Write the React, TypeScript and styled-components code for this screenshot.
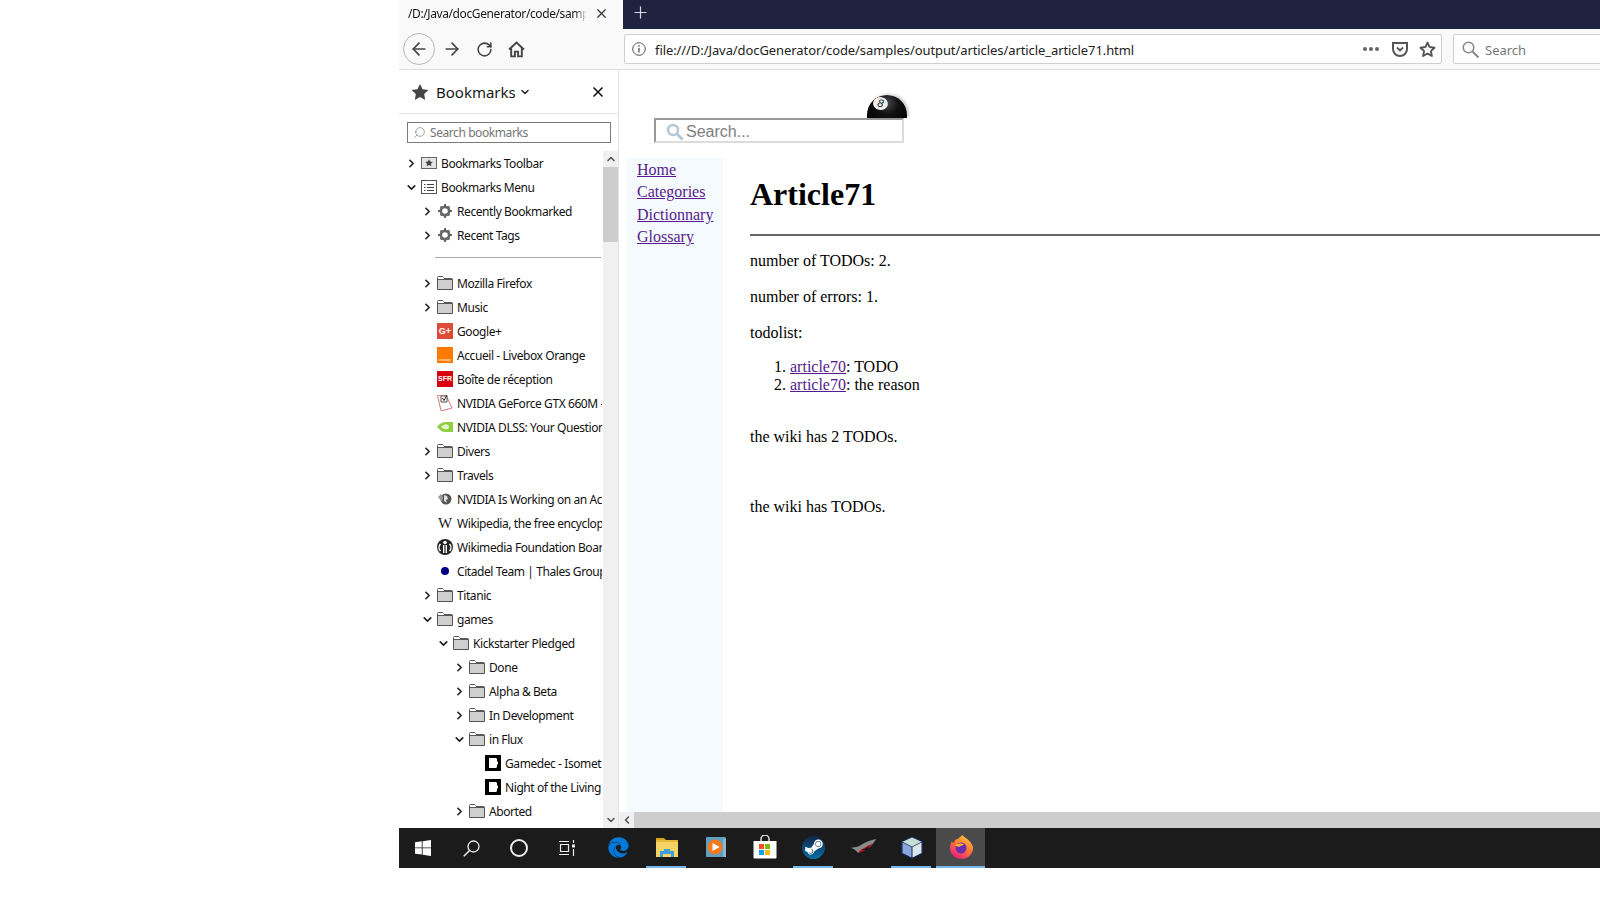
import styled, { createGlobalStyle } from 'styled-components';
import { ArrowLeft, ArrowRight, ChevronDown, ChevronLeft, ChevronRight, ChevronUp, Plus, RotateCw, Search, X } from 'lucide-react';
import { FaEdge, FaSteamSymbol } from 'react-icons/fa';

const GlobalStyle = createGlobalStyle`
  html, body {
    margin: 0;
    padding: 0;
    width: 1600px;
    height: 900px;
    overflow: hidden;
    background: #fff;
  }
`;

const uiFont = `'Noto Sans', 'Open Sans', sans-serif`;
const pageFont = `'Liberation Serif', serif`;

type IconName =
  | 'toolbar' | 'menu' | 'gear' | 'folder' | 'google' | 'orange' | 'sfr' | 'nvidiaDriver' | 'nvidiaEye'
  | 'nvidiaHead' | 'wikipedia' | 'wikimedia' | 'dot' | 'kickstarter';

type Row = { label?: string; level?: number; twisty?: 'open' | 'closed'; icon?: IconName; separator?: boolean };

const rows: Row[] = [
  { label: 'Bookmarks Toolbar', level: 0, twisty: 'closed', icon: 'toolbar' },
  { label: 'Bookmarks Menu', level: 0, twisty: 'open', icon: 'menu' },
  { label: 'Recently Bookmarked', level: 1, twisty: 'closed', icon: 'gear' },
  { label: 'Recent Tags', level: 1, twisty: 'closed', icon: 'gear' },
  { separator: true },
  { label: 'Mozilla Firefox', level: 1, twisty: 'closed', icon: 'folder' },
  { label: 'Music', level: 1, twisty: 'closed', icon: 'folder' },
  { label: 'Google+', level: 1, icon: 'google' },
  { label: 'Accueil - Livebox Orange', level: 1, icon: 'orange' },
  { label: 'Boîte de réception', level: 1, icon: 'sfr' },
  { label: 'NVIDIA GeForce GTX 660M -', level: 1, icon: 'nvidiaDriver' },
  { label: 'NVIDIA DLSS: Your Question', level: 1, icon: 'nvidiaEye' },
  { label: 'Divers', level: 1, twisty: 'closed', icon: 'folder' },
  { label: 'Travels', level: 1, twisty: 'closed', icon: 'folder' },
  { label: 'NVIDIA Is Working on an Ac', level: 1, icon: 'nvidiaHead' },
  { label: 'Wikipedia, the free encyclop', level: 1, icon: 'wikipedia' },
  { label: 'Wikimedia Foundation Boar', level: 1, icon: 'wikimedia' },
  { label: 'Citadel Team | Thales Group', level: 1, icon: 'dot' },
  { label: 'Titanic', level: 1, twisty: 'closed', icon: 'folder' },
  { label: 'games', level: 1, twisty: 'open', icon: 'folder' },
  { label: 'Kickstarter Pledged', level: 2, twisty: 'open', icon: 'folder' },
  { label: 'Done', level: 3, twisty: 'closed', icon: 'folder' },
  { label: 'Alpha & Beta', level: 3, twisty: 'closed', icon: 'folder' },
  { label: 'In Development', level: 3, twisty: 'closed', icon: 'folder' },
  { label: 'in Flux', level: 3, twisty: 'open', icon: 'folder' },
  { label: 'Gamedec - Isomet', level: 4, icon: 'kickstarter' },
  { label: 'Night of the Living', level: 4, icon: 'kickstarter' },
  { label: 'Aborted', level: 3, twisty: 'closed', icon: 'folder' },
];

const FolderIcon = () => (
  <svg width="16" height="16" viewBox="0 0 16 16">
    <path d="M.5 14.5V2.500a1 1 0 0 1 1-1h4l1.500 2h7.500a1 1 0 0 1 1 1v10z" fill="#cfcfcf" stroke="#555" />
    <path d="M.5 4.500h15" stroke="#555" fill="none" />
    <path d="M1 2h5l1.200 2H1z" fill="#fff" />
  </svg>
);

const GearIcon = () => (
  <svg width="16" height="16" viewBox="0 0 16 16">
    <g fill="#666">
      <path d="M8 2.500a5.500 5.500 0 1 0 0 11 5.500 5.500 0 0 0 0-11zm0 2.700a2.800 2.800 0 1 1 0 5.600 2.800 2.800 0 0 1 0-5.600z" />
      <path d="M7 1h2v2.500H7zM7 12.500h2V15H7zM1 7h2.500v2H1zM12.500 7H15v2h-2.500zM2.800 4.200l1.400-1.400 1.800 1.800-1.400 1.400zM10 11.400l1.400-1.400 1.800 1.800-1.400 1.400zM2.800 11.800l1.800-1.800 1.400 1.400-1.800 1.800zM10 4.600l1.800-1.800 1.400 1.400-1.800 1.800z" />
    </g>
  </svg>
);

const RowIcon = ({ name }: { name: IconName }) => {
  switch (name) {
    case 'folder':
      return <FolderIcon />;
    case 'gear':
      return <GearIcon />;
    case 'toolbar':
      return (
        <svg width="16" height="16" viewBox="0 0 16 16">
          <rect x=".5" y="2.500" width="15" height="11" fill="#e4e4e4" stroke="#666" />
          <path d="M8 4.200l1.200 2.400 2.600.3-1.900 1.800.5 2.600L8 10l-2.400 1.300.5-2.600-1.900-1.800 2.600-.3z" fill="#444" />
        </svg>
      );
    case 'menu':
      return (
        <svg width="16" height="16" viewBox="0 0 16 16">
          <rect x=".5" y="1.500" width="15" height="13" fill="#fff" stroke="#555" />
          <path d="M.5 1.500h4M3 5.500h1.500M6 5.500h7M3 8.500h1.500M6 8.500h7M3 11.500h1.500M6 11.500h7" stroke="#444" fill="none" />
        </svg>
      );
    case 'google':
      return <GoogleBadge>G+</GoogleBadge>;
    case 'orange':
      return <OrangeBadge>orange</OrangeBadge>;
    case 'sfr':
      return <SfrBadge>SFR</SfrBadge>;
    case 'nvidiaDriver':
      return (
        <svg width="16" height="16" viewBox="0 0 16 16">
          <path d="M.5.500L9 0l6 13-9 2.500H4z" fill="#fff" stroke="#d97a7a" />
          <path d="M4 1h6v6H4z" fill="#fff" stroke="#555" />
          <path d="M5.500 3l1.500 2.500L10 0" stroke="#222" fill="none" />
        </svg>
      );
    case 'nvidiaEye':
      return (
        <svg width="16" height="16" viewBox="0 0 16 16">
          <path d="M0 8c3-4 6-5 9-5h7v10H8C5 13 3 11 0 8z" fill="#8fce3f" />
          <path d="M4 8c2-2 4-3 6-2.600 1.500.3 2 1.600 2 2.600s-1 2-2 2.200C8 10.500 6 10 4 8z" fill="#e6f5cd" />
        </svg>
      );
    case 'nvidiaHead':
      return (
        <svg width="16" height="16" viewBox="0 0 16 16">
          <circle cx="9" cy="8" r="5.500" fill="#555" />
          <path d="M1 6l3-3 2 3-1 5z" fill="#999" />
          <path d="M7 4l3 1 1 3-2 1 1 3-3-2z" fill="#ddd" />
        </svg>
      );
    case 'wikipedia':
      return <WikiBadge>W</WikiBadge>;
    case 'wikimedia':
      return (
        <svg width="16" height="16" viewBox="0 0 16 16">
          <circle cx="8" cy="8" r="8" fill="#222" />
          <path d="M3.500 5a5 5 0 0 0 0 7M12.500 5a5 5 0 0 1 0 7" fill="none" stroke="#fff" strokeWidth="1.500" />
          <rect x="6" y="6" width="4" height="8" fill="#fff" />
          <rect x="7.400" y="6" width="1.200" height="8" fill="#222" />
          <circle cx="8" cy="3.500" r="1.800" fill="#fff" />
        </svg>
      );
    case 'dot':
      return (
        <svg width="16" height="16" viewBox="0 0 16 16">
          <circle cx="8" cy="8" r="4" fill="#000080" />
        </svg>
      );
    case 'kickstarter':
      return (
        <svg width="16" height="16" viewBox="0 0 16 16">
          <rect width="16" height="16" fill="#000" />
          <path d="M4 3h7l1 1v2l1 1v2l-1 1v2l-1 1H4z" fill="#fff" />
        </svg>
      );
  }
};

const taskbarTail = ['explorer', 'media', 'store', 'steam', 'rog', 'box', 'firefox'] as const;

const TaskbarGlyph = ({ name }: { name: (typeof taskbarTail)[number] }) => {
  switch (name) {
    case 'explorer':
      return (
        <svg width="22" height="20" viewBox="0 0 22 20">
          <path d="M0 1h8l2 2H0z" fill="#d9a21b" />
          <rect y="3" width="22" height="17" fill="#f6d365" />
          <rect y="3" width="22" height="2" fill="#e7b93a" />
          <path d="M4 20v-6h4v-2h6v2h4v6h-3v-3H7v3z" fill="#3f9fdc" />
        </svg>
      );
    case 'media':
      return (
        <svg width="20" height="20" viewBox="0 0 20 20">
          <rect width="20" height="20" rx="1" fill="#5f9fc0" />
          <circle cx="9" cy="10" r="7.500" fill="#f47a20" />
          <path d="M6.500 6l7 4-7 4z" fill="#fff" />
          <path d="M17 2h3v18h-3z" fill="#8ab7cf" />
        </svg>
      );
    case 'store':
      return (
        <svg width="24" height="24" viewBox="0 0 24 24">
          <path d="M8 6V4a4 4 0 0 1 8 0v2" fill="none" stroke="#ddd" strokeWidth="1.500" />
          <path d="M.500 6h23v16.500a1 1 0 0 1-1 1h-21a1 1 0 0 1-1-1z" fill="#fff" />
          <rect x="6" y="9" width="5" height="5" fill="#f25022" />
          <rect x="12" y="9" width="5" height="5" fill="#7fba00" />
          <rect x="6" y="15" width="5" height="5" fill="#00a4ef" />
          <rect x="12" y="15" width="5" height="5" fill="#ffb900" />
        </svg>
      );
    case 'steam':
      return (
        <SteamDisc>
          <FaSteamSymbol size={20} color="#fff" />
        </SteamDisc>
      );
    case 'rog':
      return (
        <svg width="26" height="16" viewBox="0 0 26 16">
          <path d="M0 9c3 0 6 2 8 5 3-2 9-3 13-7 2-2 4-5 5-7-5 1-11 3-15 6C8 8 4 8 0 9z" fill="#8a8a8a" />
          <path d="M8 14c4-1 9-3 12-6 1-1 2-2 2-3-4 1-7 4-10 5-1 1-3 2-4 4z" fill="#b0121b" />
          <path d="M12 11c2-1 5-2 7-4l-1 3c-1 1-4 1-6 1z" fill="#111" />
        </svg>
      );
    case 'box':
      return (
        <svg width="22" height="23" viewBox="0 0 22 23">
          <path d="M11 0l11 5v13l-11 5L0 18V5z" fill="#1b2450" />
          <path d="M11 1.500l9.500 4.300L11 10.500 1.500 5.800z" fill="#c6e0d8" />
          <path d="M1.500 6.500L10.500 11v10.500l-9-4.500z" fill="#86a6dc" />
          <path d="M20.500 6.500L11.500 11v10.500l9-4.500z" fill="#d9e6ea" />
        </svg>
      );
    case 'firefox':
      return (
        <svg width="24" height="24" viewBox="0 0 24 24">
          <defs>
            <linearGradient id="fx" x1="0.800" y1="0" x2="0.200" y2="1">
              <stop offset="0" stopColor="#ffcb2e" />
              <stop offset="0.500" stopColor="#ff7139" />
              <stop offset="1" stopColor="#e31587" />
            </linearGradient>
          </defs>
          <path d="M13.500 0c1 2 4 3 6 5 3 3 4.500 6 4.500 8a11.500 11 0 0 1-23 0c0-3 1-5 2-7 0 1 1 2 2 2 0-2 1-3 3-4 2-.5 3-2 5.500-4z" fill="url(#fx)" />
          <circle cx="12" cy="13" r="5.500" fill="#6e2bb0" />
          <path d="M6 11c2-3 7-3 9-1-2 0-4 1-5 2-1-1-3-1-4-1z" fill="#ffb32b" />
        </svg>
      );
  }
};

const App = () => (
  <>
    <GlobalStyle />
    <Screen>
      <Browser>
        <TabStrip>
          <ActiveTab>
            <TabTitle>/D:/Java/docGenerator/code/sampl</TabTitle>
            <X size={15} color="#3a3a3a" strokeWidth={2} />
          </ActiveTab>
          <NewTab>
            <Plus size={19} color="#d8d9e0" strokeWidth={1.500} />
          </NewTab>
        </TabStrip>

        <Toolbar>
          <BackButton>
            <ArrowLeft size={20} color="#444" strokeWidth={2} />
          </BackButton>
          <ToolButton>
            <ArrowRight size={20} color="#444" strokeWidth={2} />
          </ToolButton>
          <ToolButton>
            <RotateCw size={17} color="#444" strokeWidth={2.200} />
          </ToolButton>
          <ToolButton>
            <svg width="17" height="17" viewBox="0 0 16 16">
              <path d="M1 8l7-6.500L15 8M3 7v7.500h3.500V10h3v4.500H13V7" fill="none" stroke="#444" strokeWidth="1.800" />
            </svg>
          </ToolButton>
          <UrlBar>
            <svg width="14" height="14" viewBox="0 0 14 14">
              <circle cx="7" cy="7" r="6.300" fill="none" stroke="#555" />
              <path d="M7 6v4.500M7 3.200v1.500" stroke="#555" strokeWidth="1.300" />
            </svg>
            <UrlText>file:///D:/Java/docGenerator/code/samples/output/articles/article_article71.html</UrlText>
            <UrlDots>
              <Dot />
              <Dot />
              <Dot />
            </UrlDots>
            <svg width="16" height="15" viewBox="0 0 16 15">
              <path d="M1 1h14v6a7 7 0 0 1-14 0z" fill="none" stroke="#555" strokeWidth="2" />
              <path d="M5 5.500l3 3 3-3" fill="none" stroke="#555" strokeWidth="1.800" />
            </svg>
            <svg width="17" height="17" viewBox="0 0 16 16">
              <path d="M8 1.500l2 4.200 4.600.6-3.400 3.200.9 4.600L8 11.800l-4.100 2.300.9-4.600L1.400 6.300 6 5.700z" fill="none" stroke="#555" strokeWidth="1.800" strokeLinejoin="round" />
            </svg>
          </UrlBar>
          <SearchBar>
            <svg width="17" height="17" viewBox="0 0 17 17">
              <circle cx="6.500" cy="6.500" r="5.300" fill="none" stroke="#888" strokeWidth="1.500" />
              <path d="M10.500 10.500l6 6" stroke="#888" strokeWidth="2" />
            </svg>
            <SearchBarText>Search</SearchBarText>
          </SearchBar>
        </Toolbar>

        <Body>
          <Sidebar>
            <SidebarHeader>
              <svg width="18" height="18" viewBox="0 0 16 16">
                <path d="M8 .8l2.300 4.700 5.200.7-3.800 3.600.9 5.200L8 12.500 3.400 15l.9-5.200L.5 6.200l5.200-.7z" fill="#444" />
              </svg>
              <SidebarTitle>Bookmarks</SidebarTitle>
              <ChevronDown size={12} color="#222" strokeWidth={3} />
              <SidebarClose>
                <X size={16} color="#111" strokeWidth={2.500} />
              </SidebarClose>
            </SidebarHeader>
            <SidebarSearch>
              <Search size={13} color="#777" strokeWidth={1.200} style={{ transform: 'scaleX(-1)' }} />
              <SidebarSearchText>Search bookmarks</SidebarSearchText>
            </SidebarSearch>
            <TreeArea>
              <Tree>
                {rows.map((row, i) =>
                  row.separator ? (
                    <SeparatorRow key={i}>
                      <SeparatorLine />
                    </SeparatorRow>
                  ) : (
                    <TreeRow key={i} $level={row.level ?? 0}>
                      <Twisty>
                        {row.twisty === 'closed' && <ChevronRight size={13} color="#222" strokeWidth={3} />}
                        {row.twisty === 'open' && <ChevronDown size={13} color="#222" strokeWidth={3} />}
                      </Twisty>
                      <IconSlot>
                        <RowIcon name={row.icon as IconName} />
                      </IconSlot>
                      <RowLabel>{row.label}</RowLabel>
                    </TreeRow>
                  )
                )}
              </Tree>
              <VScrollbar>
                <ScrollArrow>
                  <ChevronUp size={12} color="#505050" strokeWidth={3} />
                </ScrollArrow>
                <VThumb />
                <VTrack />
                <ScrollArrow>
                  <ChevronDown size={12} color="#505050" strokeWidth={3} />
                </ScrollArrow>
              </VScrollbar>
            </TreeArea>
          </Sidebar>

          <Content>
            <Page>
              <SearchRow>
                <EightBall>
                  <EightFace>8</EightFace>
                </EightBall>
                <PageSearch>
                  <svg width="18" height="18" viewBox="0 0 18 18">
                    <circle cx="7" cy="7" r="5" fill="none" stroke="#b4c8d4" strokeWidth="2.500" />
                    <path d="M11 11l5.500 5.500" stroke="#b4c8d4" strokeWidth="3" />
                  </svg>
                  <PageSearchText>Search...</PageSearchText>
                </PageSearch>
              </SearchRow>
              <PageColumns>
                <SideNav>
                  <NavLink href="#">Home</NavLink>
                  <NavLink href="#">Categories</NavLink>
                  <NavLink href="#">Dictionnary</NavLink>
                  <NavLink href="#">Glossary</NavLink>
                </SideNav>
                <Article>
                  <Heading>Article71</Heading>
                  <Rule />
                  <Para>number of TODOs: 2.</Para>
                  <Para>number of errors: 1.</Para>
                  <Para>todolist:</Para>
                  <TodoList>
                    <li>
                      <ArticleLink href="#">article70</ArticleLink>: TODO
                    </li>
                    <li>
                      <ArticleLink href="#">article70</ArticleLink>: the reason
                    </li>
                  </TodoList>
                  <Para>the wiki has 2 TODOs.</Para>
                  <LastPara>the wiki has TODOs.</LastPara>
                </Article>
              </PageColumns>
            </Page>
            <HScrollbar>
              <ScrollArrow>
                <ChevronLeft size={12} color="#505050" strokeWidth={3} />
              </ScrollArrow>
              <HThumb />
            </HScrollbar>
          </Content>
        </Body>

        <Taskbar>
          <TaskSlot>
            <svg width="16" height="16" viewBox="0 0 16 16">
              <path d="M0 2.300l6.800-1v6.200H0zM7.600 1.200L16 0v7.500H7.600zM0 8.300h6.800v6.300L0 13.700zM7.600 8.300H16V16l-8.400-1.200z" fill="#fff" />
            </svg>
          </TaskSlot>
          <TaskSlot>
            <svg width="17" height="17" viewBox="0 0 17 17">
              <circle cx="10.500" cy="6.500" r="5.500" fill="none" stroke="#eee" strokeWidth="1.300" />
              <path d="M6.500 10.500L.8 16.300" stroke="#eee" strokeWidth="1.500" />
            </svg>
          </TaskSlot>
          <TaskSlot>
            <CortanaRing />
          </TaskSlot>
          <TaskSlot>
            <svg width="16" height="16" viewBox="0 0 16 16">
              <path d="M0 1.500h10M0 14.500h10M1.500 4.500h8v7h-8z" fill="none" stroke="#eee" strokeWidth="1.200" />
              <rect x="13" y="4.500" width="3" height="3" fill="#eee" />
              <path d="M14.500 0v3M14.500 9v7" stroke="#eee" strokeWidth="1.200" />
            </svg>
          </TaskSlot>
          <EdgeSlot>
            <FaEdge size={21} color="#0078d7" />
          </EdgeSlot>
          {taskbarTail.map((name) => (
            <AppSlot
              key={name}
              $running={name === 'explorer' || name === 'steam' || name === 'box' || name === 'firefox'}
              $active={name === 'firefox'}
            >
              <TaskbarGlyph name={name} />
            </AppSlot>
          ))}
        </Taskbar>
      </Browser>
    </Screen>
  </>
);

const Screen = styled.div`
  width: 1600px;
  height: 900px;
  padding-left: 399px;
  box-sizing: border-box;
  overflow: hidden;
`;

const Browser = styled.div`
  width: 1201px;
  height: 868px;
  display: flex;
  flex-direction: column;
  overflow: hidden;
`;

const TabStrip = styled.div`
  height: 29px;
  flex: none;
  display: flex;
  background: #202340;
`;

const ActiveTab = styled.div`
  width: 224px;
  flex: none;
  display: flex;
  align-items: center;
  padding: 0 14px 2px 9px;
  box-sizing: border-box;
  gap: 7px;
  background: #f9f9fa;
`;

const TabTitle = styled.div`
  flex: 1;
  min-width: 0;
  overflow: hidden;
  white-space: nowrap;
  font: 12px ${uiFont};
  letter-spacing: -0.4px;
  color: #18181a;
  -webkit-mask-image: linear-gradient(to left, transparent 0, #000 12px);
  mask-image: linear-gradient(to left, transparent 0, #000 12px);
`;

const NewTab = styled.div`
  width: 34px;
  display: flex;
  align-items: center;
  justify-content: center;
  padding-bottom: 4px;
  box-sizing: border-box;
`;

const Toolbar = styled.div`
  height: 41px;
  flex: none;
  display: flex;
  align-items: center;
  padding: 0 0 0 4px;
  box-sizing: border-box;
  background: #f9f9fa;
  border-bottom: 1px solid #dcdcdc;
`;

const BackButton = styled.div`
  width: 32px;
  height: 32px;
  flex: none;
  box-sizing: border-box;
  display: flex;
  align-items: center;
  justify-content: center;
  margin-right: 1px;
  border: 1px solid #b8b8b8;
  border-radius: 50%;
`;

const ToolButton = styled.div`
  width: 32px;
  height: 32px;
  flex: none;
  display: flex;
  align-items: center;
  justify-content: center;
`;

const UrlBar = styled.div`
  width: 818px;
  height: 30px;
  flex: none;
  margin-left: 92px;
  display: flex;
  align-items: center;
  gap: 11px;
  padding: 0 5px 0 7px;
  box-sizing: border-box;
  background: #fff;
  border: 1px solid #cfcfcf;
  border-radius: 2px;
`;

const UrlText = styled.div`
  flex: 1;
  min-width: 0;
  margin-left: -2px;
  white-space: nowrap;
  overflow: hidden;
  padding-top: 2px;
  font: 13px ${uiFont};
  letter-spacing: -0.08px;
  color: #222;
`;

const UrlDots = styled.div`
  display: flex;
  gap: 2px;
  margin-right: 2px;
`;

const Dot = styled.span`
  width: 4px;
  height: 4px;
  border-radius: 50%;
  background: #666;
`;

const SearchBar = styled.div`
  width: 300px;
  height: 30px;
  flex: none;
  margin-left: 11px;
  display: flex;
  align-items: center;
  gap: 6px;
  padding-left: 8px;
  box-sizing: border-box;
  background: #fff;
  border: 1px solid #cfcfcf;
  border-radius: 2px;
`;

const SearchBarText = styled.div`
  padding-top: 2px;
  font: 13px ${uiFont};
  color: #777;
`;

const Body = styled.div`
  flex: 1;
  min-height: 0;
  display: flex;
`;

const Sidebar = styled.div`
  width: 220px;
  flex: none;
  display: flex;
  flex-direction: column;
  box-sizing: border-box;
  border-right: 1px solid #e4e4e4;
  background: #fff;
`;

const SidebarHeader = styled.div`
  height: 44px;
  flex: none;
  display: flex;
  align-items: center;
  padding: 0 12px 0 12px;
  box-sizing: border-box;
  border-bottom: 1px solid #e0e0e0;
`;

const SidebarTitle = styled.div`
  margin: 0 3px 0 7px;
  font: 15px ${uiFont};
  color: #18181a;
`;

const SidebarClose = styled.div`
  margin-left: auto;
  display: flex;
`;

const SidebarSearch = styled.div`
  height: 21px;
  flex: none;
  margin: 8px 7px 8px 8px;
  display: flex;
  align-items: center;
  gap: 4px;
  padding-left: 5px;
  box-sizing: border-box;
  border: 1px solid #7a7a7a;
`;

const SidebarSearchText = styled.div`
  font: 12px ${uiFont};
  letter-spacing: -0.42px;
  color: #757575;
`;

const TreeArea = styled.div`
  flex: 1;
  min-height: 0;
  display: flex;
`;

const Tree = styled.div`
  flex: 1;
  min-width: 0;
  overflow: hidden;
`;

const TreeRow = styled.div<{ $level: number }>`
  height: 24px;
  display: flex;
  align-items: center;
  padding-left: ${({ $level }) => 4 + $level * 16}px;
  white-space: nowrap;
`;

const Twisty = styled.div`
  width: 16px;
  height: 16px;
  flex: none;
  margin-right: 2px;
  display: flex;
  align-items: center;
  justify-content: center;
`;

const IconSlot = styled.div`
  width: 16px;
  height: 16px;
  flex: none;
  margin-right: 4px;
  display: flex;
`;

const RowLabel = styled.div`
  flex: 1;
  min-width: 0;
  overflow: hidden;
  margin-right: 1px;
  font: 12px ${uiFont};
  letter-spacing: -0.42px;
  color: #111;
`;

const SeparatorRow = styled.div`
  height: 24px;
  display: flex;
  align-items: center;
  padding: 0 2px 4px 36px;
  box-sizing: border-box;
`;

const SeparatorLine = styled.div`
  flex: 1;
  height: 1px;
  background: #a8a8a8;
`;

const VScrollbar = styled.div`
  width: 15px;
  flex: none;
  display: flex;
  flex-direction: column;
  background: #f0f0f0;
`;

const ScrollArrow = styled.div`
  width: 15px;
  height: 16px;
  flex: none;
  display: flex;
  align-items: center;
  justify-content: center;
  background: #f0f0f0;
`;

const VThumb = styled.div`
  height: 75px;
  flex: none;
  background: #cdcdcd;
`;

const VTrack = styled.div`
  flex: 1;
`;

const Content = styled.div`
  flex: 1;
  min-width: 0;
  display: flex;
  flex-direction: column;
  background: #fff;
`;

const Page = styled.div`
  flex: 1;
  min-height: 0;
  overflow: hidden;
  display: flex;
  flex-direction: column;
`;

const SearchRow = styled.div`
  position: relative;
  height: 88px;
  flex: none;
  padding: 48px 0 0 35px;
  box-sizing: border-box;
`;

const EightBall = styled.div`
  position: absolute;
  left: 248px;
  top: 25px;
  width: 40px;
  height: 23px;
  overflow: hidden;
  border-radius: 20px 20px 0 0;
  background: radial-gradient(circle at 50% 35%, #4a4a4a 0, #111 45%, #000 100%);
  box-shadow: 2px -1px 3px rgba(0, 0, 0, 0.2);
`;

const EightFace = styled.div`
  width: 15px;
  height: 13px;
  margin: 2px 0 0 6px;
  border-radius: 50%;
  background: #eee;
  font: italic 11px/13px 'Liberation Sans', sans-serif;
  text-align: center;
  color: #222;
  transform: rotate(12deg);
`;

const PageSearch = styled.div`
  width: 250px;
  height: 25px;
  display: flex;
  align-items: center;
  gap: 2px;
  padding: 3px 0 0 10px;
  box-sizing: border-box;
  background: #fff;
  border-width: 2px;
  border-style: solid;
  border-color: #999 #dcdcdc #dcdcdc #999;
`;

const PageSearchText = styled.div`
  font: 16px 'Liberation Sans', sans-serif;
  color: #808080;
`;

const PageColumns = styled.div`
  flex: 1;
  min-height: 0;
  display: flex;
  padding-left: 8px;
`;

const SideNav = styled.nav`
  width: 96px;
  flex: none;
  display: flex;
  flex-direction: column;
  gap: 4.500px;
  padding: 2.900px 0 0 10px;
  box-sizing: border-box;
  background: #f5fafe;
`;

const NavLink = styled.a`
  font: 16px/18px ${pageFont};
  color: #551a8b;
`;

const Article = styled.div`
  width: 850px;
  flex: none;
  margin-left: 27px;
  font: 16px/18px ${pageFont};
  color: #000;
`;

const Heading = styled.h1`
  margin: 18px 0 0;
  font: bold 32px/37px ${pageFont};
`;

const Rule = styled.div`
  height: 2px;
  margin-top: 21px;
  background: #666;
`;

const Para = styled.p`
  margin: 16px 0 18px;
`;

const LastPara = styled.p`
  margin: 52px 0 0;
`;

const ArticleLink = styled.a`
  color: #551a8b;
`;

const TodoList = styled.ol`
  margin: -2px 0 34px;
  padding-left: 40px;
`;

const HScrollbar = styled.div`
  height: 16px;
  flex: none;
  display: flex;
  background: #f0f0f0;
`;

const HThumb = styled.div`
  flex: 1;
  background: #cdcdcd;
`;

const Taskbar = styled.div`
  height: 40px;
  flex: none;
  display: flex;
  background: #1b1b1b;
`;

const TaskSlot = styled.div`
  width: 48px;
  flex: none;
  display: flex;
  align-items: center;
  justify-content: center;
`;

const CortanaRing = styled.div`
  width: 14px;
  height: 14px;
  margin-bottom: 1px;
  box-sizing: content-box;
  border-radius: 50%;
  border: 2px solid #eee;
`;

const EdgeSlot = styled(TaskSlot)`
  margin-left: 3px;
  padding-bottom: 2px;
  box-sizing: border-box;
`;

const AppSlot = styled.div<{ $running: boolean; $active: boolean }>`
  position: relative;
  width: 49px;
  flex: none;
  display: flex;
  align-items: center;
  justify-content: center;
  padding-bottom: 2px;
  box-sizing: border-box;
  background: ${({ $active }) => ($active ? '#4a4a4a' : 'transparent')};

  &::after {
    content: '';
    display: ${({ $running }) => ($running ? 'block' : 'none')};
    position: absolute;
    left: ${({ $active }) => ($active ? '0' : '4px')};
    right: ${({ $active }) => ($active ? '0' : '5px')};
    bottom: 0;
    height: 2px;
    background: #76b9ed;
  }
`;

const SteamDisc = styled.div`
  width: 23px;
  height: 23px;
  display: flex;
  align-items: center;
  justify-content: center;
  border-radius: 50%;
  background: linear-gradient(to bottom, #0f2447, #0b6ea8);
`;

const GoogleBadge = styled.div`
  width: 16px;
  height: 16px;
  background: #dd4b39;
  font: bold 9px/16px 'Liberation Sans', sans-serif;
  text-align: center;
  color: #fff;
`;

const OrangeBadge = styled.div`
  width: 16px;
  height: 16px;
  display: flex;
  align-items: flex-end;
  justify-content: center;
  overflow: hidden;
  background: #ff7900;
  font: 4px/6px 'Liberation Sans', sans-serif;
  color: #fff;
`;

const SfrBadge = styled.div`
  width: 16px;
  height: 16px;
  background: #d8000c;
  font: bold 7px/16px 'Liberation Sans', sans-serif;
  text-align: center;
  color: #fff;
`;

const WikiBadge = styled.div`
  width: 16px;
  height: 16px;
  font: 15px/16px ${pageFont};
  text-align: center;
  color: #222;
`;

export default App;
